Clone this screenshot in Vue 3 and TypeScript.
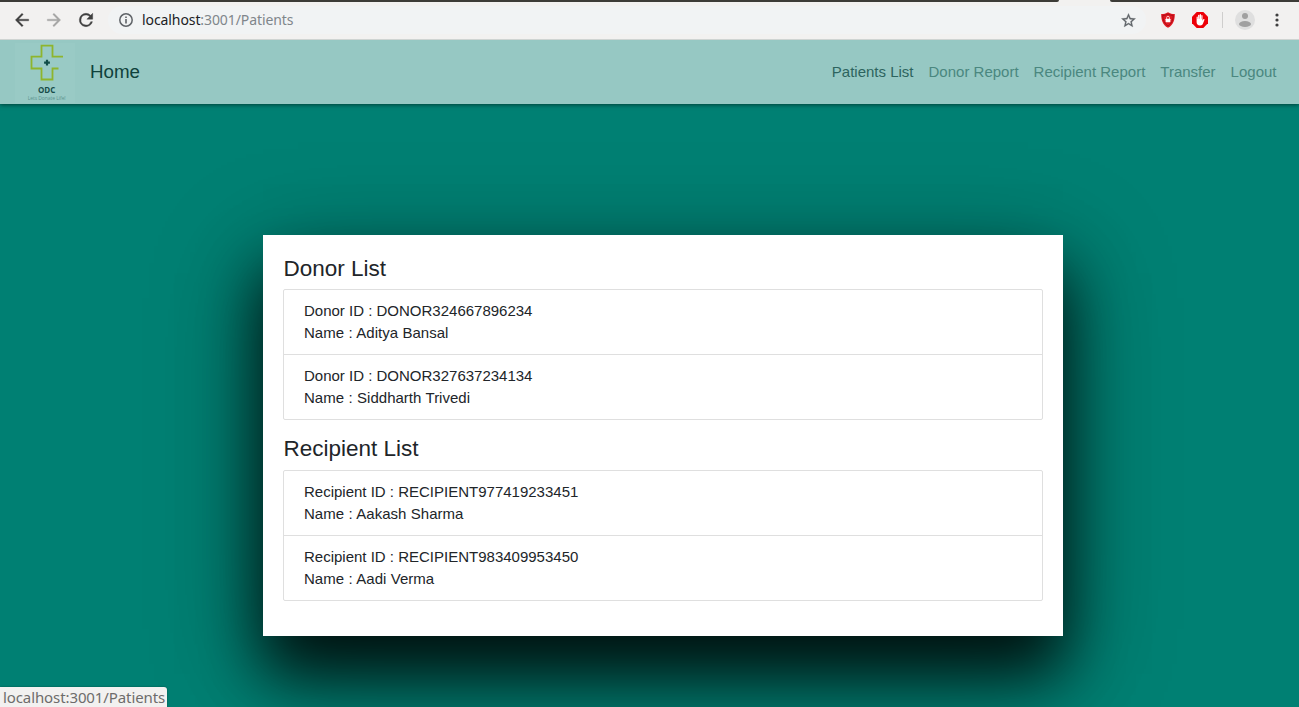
<script setup lang="ts">
interface Person { id: string; name: string }
interface Group { title: string; label: string; people: Person[] }

const links: string[] = ['Patients List', 'Donor Report', 'Recipient Report', 'Transfer', 'Logout']
const groups: Group[] = [
  {
    title: 'Donor List',
    label: 'Donor ID',
    people: [
      { id: 'DONOR324667896234', name: 'Aditya Bansal' },
      { id: 'DONOR327637234134', name: 'Siddharth Trivedi' },
    ],
  },
  {
    title: 'Recipient List',
    label: 'Recipient ID',
    people: [
      { id: 'RECIPIENT977419233451', name: 'Aakash Sharma' },
      { id: 'RECIPIENT983409953450', name: 'Aadi Verma' },
    ],
  },
]
</script>

<template>
  <div class="window">
    <div class="tabstrip"><span class="strip left"></span><span class="strip right"></span></div>
    <div class="toolbar">
      <svg class="nav-icon" viewBox="0 0 24 24"><path fill="#3f3f3f" stroke="#3f3f3f" stroke-width=".4" d="M20 11H7.83l5.59-5.59L12 4l-8 8 8 8 1.41-1.41L7.83 13H20z" /></svg>
      <svg class="nav-icon" viewBox="0 0 24 24"><path fill="#a5a5a4" stroke="#a5a5a4" stroke-width=".4" d="M12 4l-1.41 1.41L16.17 11H4v2h12.17l-5.58 5.59L12 20l8-8z" /></svg>
      <svg class="nav-icon" viewBox="0 0 24 24"><path fill="#3f3f3f" stroke="#3f3f3f" stroke-width=".5" d="M17.65 6.35A7.96 7.96 0 0 0 12 4a8 8 0 1 0 7.73 10h-2.08A6 6 0 1 1 12 6c1.66 0 3.14.69 4.22 1.78L13 11h7V4z" /></svg>
      <div class="omnibox">
        <svg class="info" viewBox="0 0 16 16"><circle cx="8" cy="8" r="6.2" fill="none" stroke="#5f6368" stroke-width="1.5" /><path fill="#5f6368" d="M7.2 4.500h1.600v1.600H7.2zM7.2 7.100h1.600v4.400H7.2z" /></svg>
        <span class="url"><span class="host">localhost</span>:3001/Patients</span>
        <svg class="star" viewBox="0 0 24 24"><path fill="#5f6368" stroke="#5f6368" stroke-width=".4" d="M22 9.24l-7.19-.62L12 2 9.19 8.63 2 9.24l5.46 4.73L5.82 21 12 17.27 18.18 21l-1.63-7.03zM12 15.4l-3.76 2.27 1-4.28-3.32-2.88 4.38-.38L12 6.1l1.71 4.04 4.38.38-3.32 2.88 1 4.28z" /></svg>
      </div>
      <svg class="ext shield" viewBox="0 0 16 16">
        <path fill="#e11a22" d="M8 .2C6 1.600 3.800 2 1.200 2c0 6 1.300 11 6.800 13.800C13.500 13 14.800 8 14.800 2 12.200 2 10 1.600 8 .2z" />
        <path fill="none" stroke="#a70f18" stroke-width=".9" d="M8 2C6.500 3 4.700 3.400 2.700 3.500 3 8 4.300 11.700 8 14c3.700-2.300 5-6 5.300-10.500C11.300 3.400 9.500 3 8 2z" />
        <rect x="5.600" y="6.800" width="4.800" height="3.400" rx=".4" fill="#fff" />
        <path d="M6.600 7V5.700a1.400 1.400 0 0 1 2.800 0V7" fill="none" stroke="#ffe9e9" stroke-width=".8" />
      </svg>
      <svg class="ext hand" viewBox="0 0 16 16">
        <path fill="#ed0008" d="M4.700 0h6.600L16 4.700v6.600L11.300 16H4.700L0 11.300V4.700z" />
        <path fill="#fff" d="M4.600 5.200c0-.9 1.200-.9 1.200 0V7h.3V3.300c0-.9 1.300-.9 1.300 0V6.700h.3V2.700c0-.9 1.300-.9 1.300 0v4h.3V3.700c0-.9 1.200-.9 1.200 0v5l.7-1.200c.5-.8 1.500-.5 1.200.4l-1.400 3.700c-.4 1.300-1.300 2-2.800 2-2.500 0-3.600-1.400-3.600-3.500z" />
      </svg>
      <span class="divider"></span>
      <svg class="avatar" viewBox="0 0 20 20"><circle cx="10" cy="10" r="10" fill="#dfdfdf" /><circle cx="10" cy="6" r="3" fill="#a0a0a0" /><ellipse cx="10" cy="14" rx="6" ry="3" fill="#a0a0a0" /></svg>
      <svg class="menu" viewBox="0 0 4 14"><circle cx="2" cy="2" r="1.600" fill="#3f3f3f" /><circle cx="2" cy="7" r="1.600" fill="#3f3f3f" /><circle cx="2" cy="12" r="1.600" fill="#3f3f3f" /></svg>
    </div>

    <nav class="navbar">
      <svg class="logo" viewBox="0 0 60 60">
        <rect width="60" height="60" fill="#99cac5" />
        <path d="M48 13.700H37.500V2.700H26.500V13.700H16.500V25.500H26.500V36.500H37.500V25.500H43.500" fill="none" stroke="#8eb52d" stroke-width="1.800" />
        <path d="M32 16.700v5.800M29.100 19.600h5.800" stroke="#104d48" stroke-width="2.200" />
        <text x="31.700" y="50" text-anchor="middle" textLength="17.500" class="logo-name">ODC</text>
        <text x="31.700" y="57.200" text-anchor="middle" textLength="38" class="logo-tag">Lets Donate Life!</text>
      </svg>
      <a class="brand">Home</a>
      <div class="links">
        <a v-for="(link, i) in links" :key="link" :class="{ active: i === 0 }">{{ link }}</a>
      </div>
    </nav>

    <main>
      <section class="card">
        <template v-for="group in groups" :key="group.title">
          <h2>{{ group.title }}</h2>
          <ul>
            <li v-for="p in group.people" :key="p.id">
              <div>{{ group.label }} : {{ p.id }}</div>
              <div class="name">Name : {{ p.name }}</div>
            </li>
          </ul>
        </template>
      </section>
    </main>
    <div class="status"><span>localhost:3001/Patients</span></div>
  </div>
</template>

<style>
body { margin: 0; overflow: hidden; }
</style>

<style scoped>
.window {
  position: relative;
  display: flex;
  flex-direction: column;
  width: 100%;
  height: 707px;
  overflow: hidden;
  background: #008073;
  font-family: "Liberation Sans", Arial, sans-serif;
  color: #212529;
}
.tabstrip { display: flex; justify-content: space-between; height: 2px; background: #f2f1f0; }
.strip { background: #3c3b37; height: 2px; }
.left { width: 1059px; border-bottom-right-radius: 3px; }
.right { width: 189px; border-bottom-left-radius: 3px; }
.toolbar {
  position: relative;
  z-index: 1;
  display: flex;
  align-items: center;
  box-sizing: border-box;
  height: 38px;
  padding: 0 12px 1px;
  background: #f2f1f0;
  border-bottom: 1px solid #cfd4d2;
}
.nav-icon { flex: none; width: 20px; height: 20px; margin-right: 12px; }
.omnibox {
  display: flex;
  align-items: center;
  box-sizing: border-box;
  width: 1038px;
  height: 28px;
  padding: 0 10px;
  border-radius: 14px;
  background: #f1f3f4;
}
.info { width: 16px; height: 16px; margin-right: 8px; }
.url { flex: 1; font: 14px/20px "Noto Sans", sans-serif; letter-spacing: -.09px; color: #80868b; white-space: nowrap; }
.host { color: #202124; }
.star { width: 17px; height: 17px; margin-right: -.5px; }
.ext { flex: none; width: 16px; height: 16px; }
.shield { margin-left: 14px; }
.hand { margin-left: 16px; }
.divider { flex: none; width: 1px; height: 16px; margin: 0 12px 0 14px; background: #cfcecd; }
.avatar { flex: none; width: 20px; height: 20px; }
.menu { flex: none; width: 4px; height: 14px; margin-left: 20px; }
.navbar {
  position: relative;
  display: flex;
  align-items: center;
  box-sizing: border-box;
  height: 64px;
  padding: 0 22.5px 0 15px;
  background: #96c8c3;
  box-shadow: 0 1px 4px rgba(0, 0, 0, .5);
}
.logo { flex: none; width: 60px; height: 60px; margin-top: 1px; }
.logo-name { font: bold 8px "Open Sans", sans-serif; fill: #174c48; }
.logo-tag { font: 5px "Open Sans", sans-serif; fill: #5c948f; }
.brand { margin-left: 15px; font-size: 18.75px; line-height: 28px; color: #0f423c; }
.links { display: flex; gap: 15px; margin-left: auto; font-size: 15px; line-height: 22px; color: #4a877f; }
.links .active { color: #2d645e; }
main { padding: 131px 0 0 263px; }
.card {
  box-sizing: border-box;
  width: 800px;
  height: 401px;
  padding: 20px;
  background: #fff;
  box-shadow: 0 38px 60px rgba(0, 0, 0, .8), 0 28px 100px rgba(0, 0, 0, .42);
}
h2 { margin: 0 0 7px; padding-left: .5px; font-size: 22.5px; font-weight: 400; line-height: 27px; }
ul { margin: 0 0 15px; padding: 0; list-style: none; border: 1px solid #dfdfdf; border-radius: 2px; }
ul + h2 { margin-bottom: 8px; }
li { height: 44px; padding: 10px 20px; font-size: 15px; line-height: 22px; }
li + li { border-top: 1px solid #dfdfdf; }
.name { word-spacing: .3px; }
.status {
  position: absolute;
  left: 0;
  bottom: 0;
  box-sizing: border-box;
  width: 167px;
  height: 20px;
  padding-left: 3px;
  border-radius: 0 3px 0 0;
  background: #f2f1f0;
  box-shadow: 0 0 2px rgba(0, 0, 0, .4);
  font: 15px/21px "Noto Sans", sans-serif;
  letter-spacing: -.1px;
  color: #6d6c6b;
  white-space: nowrap;
}
</style>
